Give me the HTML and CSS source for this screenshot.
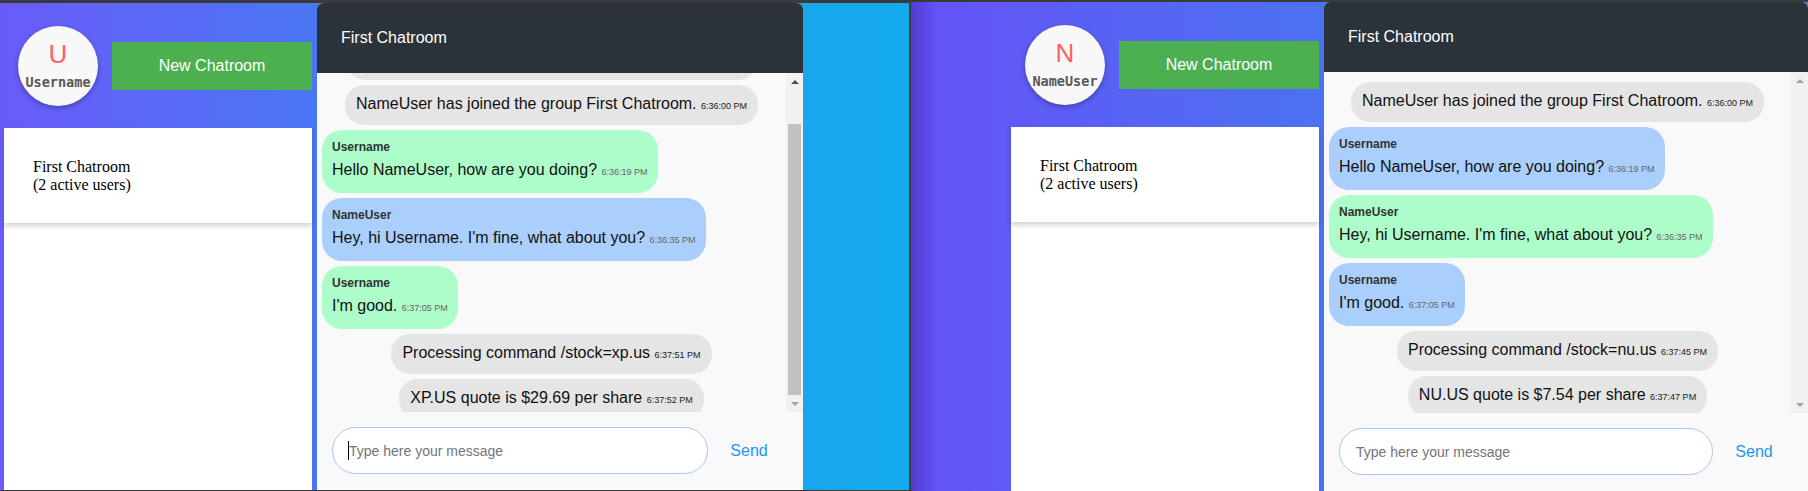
FILE: index.html
```html
<!DOCTYPE html>
<html lang="en">
<head>
<meta charset="utf-8">
<title>Chatrooms</title>
<link rel="stylesheet" href="styles.css">
</head>
<body>
<div class="screen">
  <section class="window window-left">
    <aside class="sidebar">
      <div class="profile">
        <div class="avatar"><span class="avatar-initial">U</span><span class="avatar-name">Username</span></div>
        <button class="new-room" type="button">New Chatroom</button>
      </div>
      <div class="room-list">
        <div class="room-card">First Chatroom<br>(2 active users)</div>
      </div>
    </aside>
    <main class="chat">
      <header class="chat-header">First Chatroom</header>
      <div class="chat-body">
        <div class="messages">
          <div class="message-list scrolled">
            <div class="bubble system">Username has joined the group First Chatroom. <span class="time">6:35:41 PM</span></div>
            <div class="bubble system">NameUser has joined the group First Chatroom. <span class="time">6:36:00 PM</span></div>
            <div class="bubble mine"><div class="sender">Username</div><div class="text">Hello NameUser, how are you doing? <span class="time">6:36:19 PM</span></div></div>
            <div class="bubble theirs"><div class="sender">NameUser</div><div class="text">Hey, hi Username. I'm fine, what about you? <span class="time">6:36:35 PM</span></div></div>
            <div class="bubble mine"><div class="sender">Username</div><div class="text">I'm good. <span class="time">6:37:05 PM</span></div></div>
            <div class="bubble system">Processing command /stock=xp.us <span class="time">6:37:51 PM</span></div>
            <div class="bubble system">XP.US quote is $29.69 per share <span class="time">6:37:52 PM</span></div>
          </div>
        </div>
        <div class="scrollbar">
          <div class="sb-btn"><span class="arrow-up active"></span></div>
          <div class="sb-track"><div class="sb-thumb"></div></div>
          <div class="sb-btn"><span class="arrow-down"></span></div>
        </div>
      </div>
      <form class="composer">
        <span class="field focused"><input class="message-input" type="text" placeholder="Type here your message"></span>
        <button class="send" type="button">Send</button>
      </form>
    </main>
  </section>
  <div class="divider"></div>
  <section class="window window-right">
    <aside class="sidebar">
      <div class="profile">
        <div class="avatar"><span class="avatar-initial">N</span><span class="avatar-name">NameUser</span></div>
        <button class="new-room" type="button">New Chatroom</button>
      </div>
      <div class="room-list">
        <div class="room-card">First Chatroom<br>(2 active users)</div>
      </div>
    </aside>
    <main class="chat">
      <header class="chat-header">First Chatroom</header>
      <div class="chat-body">
        <div class="messages">
          <div class="message-list">
            <div class="bubble system">NameUser has joined the group First Chatroom. <span class="time">6:36:00 PM</span></div>
            <div class="bubble theirs"><div class="sender">Username</div><div class="text">Hello NameUser, how are you doing? <span class="time">6:36:19 PM</span></div></div>
            <div class="bubble mine"><div class="sender">NameUser</div><div class="text">Hey, hi Username. I'm fine, what about you? <span class="time">6:36:35 PM</span></div></div>
            <div class="bubble theirs"><div class="sender">Username</div><div class="text">I'm good. <span class="time">6:37:05 PM</span></div></div>
            <div class="bubble system">Processing command /stock=nu.us <span class="time">6:37:45 PM</span></div>
            <div class="bubble system">NU.US quote is $7.54 per share <span class="time">6:37:47 PM</span></div>
          </div>
        </div>
        <div class="scrollbar">
          <div class="sb-btn"><span class="arrow-up"></span></div>
          <div class="sb-track"></div>
          <div class="sb-btn"><span class="arrow-down"></span></div>
        </div>
      </div>
      <form class="composer">
        <span class="field"><input class="message-input" type="text" placeholder="Type here your message"></span>
        <button class="send" type="button">Send</button>
      </form>
    </main>
  </section>
</div>
</body>
</html>
```

FILE: styles.css
```css
* { box-sizing: border-box; }

html, body {
  margin: 0;
  padding: 0;
  background: #3a3a3a;
  overflow: hidden;
}

body {
  font-family: "Liberation Sans", Arial, sans-serif;
  width: 1808px;
  height: 491px;
}

.screen {
  display: flex;
  align-items: flex-start;
  width: 1808px;
  height: 491px;
}

.window {
  display: flex;
  flex: none;
  overflow: hidden;
}

.window-left {
  width: 909px;
  height: 487px;
  margin-top: 3px;
  background: linear-gradient(90deg, #6a5bf9 0px, #4a76f4 314px, #18a6ec 803px, #14aaeb 909px);
}

.divider {
  flex: none;
  width: 2px;
  height: 491px;
  background: #3c3c3c;
}

.window-right {
  width: 897px;
  height: 489px;
  margin-top: 2px;
  background:
    linear-gradient(90deg, rgba(30, 10, 100, 0.28) 0px, rgba(30, 10, 100, 0) 26px),
    linear-gradient(90deg, #6650f8 0px, #5f5af6 100px, #4b72f1 410px, #3386ee 897px);
}

/* Sidebar */
.sidebar {
  display: flex;
  flex-direction: column;
  flex: none;
  width: 308px;
}

.window-left .sidebar {
  margin-left: 4px;
}

.window-right .sidebar {
  margin-left: 100px;
}

.profile {
  height: 125px;
  display: flex;
  align-items: center;
  gap: 14px;
  padding-left: 14px;
}

.avatar {
  flex: 0 1 80px;
  height: 80px;
  border-radius: 50%;
  background: #f8f8f8;
  box-shadow: 0 2px 5px rgba(0, 0, 0, 0.3);
  display: flex;
  flex-direction: column;
  align-items: center;
  justify-content: center;
  overflow: hidden;
}

.avatar-initial {
  font-family: "Liberation Sans", Arial, sans-serif;
  font-size: 26px;
  line-height: 26px;
  color: #ff5f5f;
}

.avatar-name {
  margin-top: 7px;
  font-family: "DejaVu Sans Mono", "Liberation Mono", monospace;
  font-weight: bold;
  font-size: 13.5px;
  line-height: 16px;
  color: #575757;
}

.new-room {
  flex: 0 1 200px;
  min-width: 0;
  height: 48px;
  padding: 0;
  border: none;
  background: #4caf50;
  color: #ffffff;
  font-family: "Liberation Sans", Arial, sans-serif;
  font-size: 16px;
}

.room-list {
  flex: 1;
  background: #ffffff;
}

.room-card {
  padding: 30px 29px 29px;
  font-family: "Liberation Serif", "Times New Roman", serif;
  font-size: 16px;
  line-height: 18px;
  color: #000000;
  background: #ffffff;
  box-shadow: 0 3px 5px rgba(0, 0, 0, 0.18);
}

/* Chat panel */
.chat {
  display: flex;
  flex-direction: column;
  flex: none;
  margin-left: 5px;
  background: #f9f9f9;
  border-radius: 6px 6px 0 0;
  overflow: hidden;
}

.window-left .chat {
  width: 486px;
}

.window-right .chat {
  width: 484px;
}

.chat-header {
  height: 70px;
  flex: none;
  display: flex;
  align-items: center;
  padding-left: 24px;
  background: #2b323a;
  color: #ffffff;
  font-size: 16px;
}

.chat-body {
  height: 339px;
  flex: none;
  display: flex;
}

.window-right .chat-body {
  height: 341px;
}

.messages {
  flex: 1;
  overflow: hidden;
}

.message-list {
  display: flex;
  flex-direction: column;
  align-items: flex-start;
  gap: 5px;
  padding: 10px 5px;
}

.scrolled {
  margin-top: -43px;
}

.bubble {
  padding: 10px;
  border-radius: 20px;
  font-size: 16px;
  line-height: 18px;
  color: #111111;
}

.bubble.system {
  align-self: center;
  background: #e5e5e5;
  border-radius: 19px;
  padding: 10px 11px;
}

.bubble.mine {
  background: #adfdca;
}

.bubble.theirs {
  background: #aacffc;
}

.sender {
  font-size: 12px;
  line-height: 14px;
  font-weight: bold;
  color: #333333;
  margin-bottom: 5px;
}

.text {
  line-height: 21px;
}

.time {
  font-size: 9px;
  color: #222222;
}

.bubble.mine .time,
.bubble.theirs .time {
  color: #666666;
}

/* Fake scrollbar */
.scrollbar {
  width: 17px;
  flex: none;
  display: flex;
  flex-direction: column;
  background: #f1f1f1;
}

.sb-btn {
  height: 17px;
  flex: none;
  display: flex;
  align-items: center;
  justify-content: center;
}

.arrow-up {
  width: 0;
  height: 0;
  border-left: 4px solid transparent;
  border-right: 4px solid transparent;
  border-bottom: 4px solid #a3a3a3;
}

.arrow-up.active {
  border-bottom-color: #505050;
}

.arrow-down {
  width: 0;
  height: 0;
  border-left: 4px solid transparent;
  border-right: 4px solid transparent;
  border-top: 4px solid #a3a3a3;
}

.sb-track {
  flex: 1;
  display: flex;
  flex-direction: column;
}

.sb-thumb {
  margin: 34px 2px 0;
  height: 271px;
  background: #c1c1c1;
}

/* Composer */
.composer {
  flex: 1;
  margin: 0;
  display: flex;
  align-items: flex-start;
  padding: 15px 13px 0 15px;
}

.field {
  flex: 1;
  display: flex;
  position: relative;
}

.field.focused::after {
  content: "";
  position: absolute;
  left: 16px;
  top: 14px;
  width: 1px;
  height: 19px;
  background: #000000;
}

.message-input {
  width: 100%;
  height: 47px;
  padding: 0 16px;
  border: 1px solid #a8c8f4;
  border-radius: 24px;
  background: #ffffff;
  font-family: "Liberation Sans", Arial, sans-serif;
  font-size: 14px;
  color: #111111;
  outline: none;
}

.message-input::placeholder {
  color: #757575;
}

.send {
  width: 82px;
  height: 47px;
  flex: none;
  padding: 0;
  border: none;
  background: transparent;
  color: #2196f3;
  font-family: "Liberation Sans", Arial, sans-serif;
  font-size: 16px;
}
```
